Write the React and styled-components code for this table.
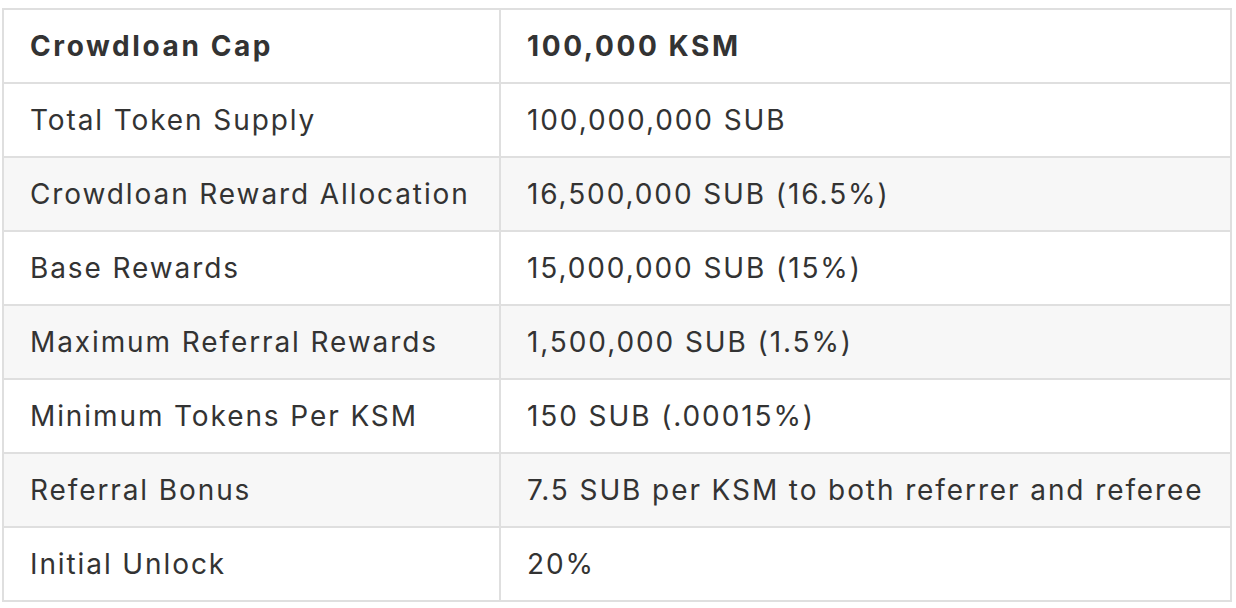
import React from "react";
import styled, { createGlobalStyle } from "styled-components";

const Global = createGlobalStyle`
  html, body { margin: 0; padding: 0; background: #ffffff; }
  body {
    font-family: Inter, "Noto Sans", "Liberation Sans", sans-serif;
    color: #333333;
  }
`;

const Page = styled.div`
  padding: 8px 0 0 2px;
`;

const Table = styled.table`
  border-collapse: collapse;
  width: 1230px;
  table-layout: fixed;
  font-size: 28px;
  line-height: 48px;
`;

const Row = styled.tr`
  background: ${(p) => (p.$shade ? "#f7f7f7" : "#ffffff")};
`;

const Cell = styled.td`
  border: 2px solid #dfdfdf;
  padding: 12px 20px 12px 26px;
  height: 48px;
  font-weight: ${(p) => (p.$bold ? 700 : 400)};
  letter-spacing: ${(p) => (p.$bold ? "2.6px" : "1.9px")};
  white-space: nowrap;
  text-align: left;
  vertical-align: middle;
`;

const LabelCol = styled.col`
  width: 497px;
`;

const rows = [
  ["Total Token Supply", "100,000,000 SUB"],
  ["Crowdloan Reward Allocation", "16,500,000 SUB (16.5%)"],
  ["Base Rewards", "15,000,000 SUB (15%)"],
  ["Maximum Referral Rewards", "1,500,000 SUB (1.5%)"],
  ["Minimum Tokens Per KSM", "150 SUB (.00015%)"],
  ["Referral Bonus", "7.5 SUB per KSM to both referrer and referee"],
  ["Initial Unlock", "20%"],
];

export default function App() {
  return (
    <>
      <Global />
      <Page>
        <Table>
          <colgroup>
            <LabelCol />
            <col />
          </colgroup>
          <thead>
            <Row>
              <Cell as="th" $bold>Crowdloan Cap</Cell>
              <Cell as="th" $bold>100,000 KSM</Cell>
            </Row>
          </thead>
          <tbody>
            {rows.map(([k, v], i) => (
              <Row key={k} $shade={i % 2 === 1}>
                <Cell>{k}</Cell>
                <Cell>{v}</Cell>
              </Row>
            ))}
          </tbody>
        </Table>
      </Page>
    </>
  );
}
